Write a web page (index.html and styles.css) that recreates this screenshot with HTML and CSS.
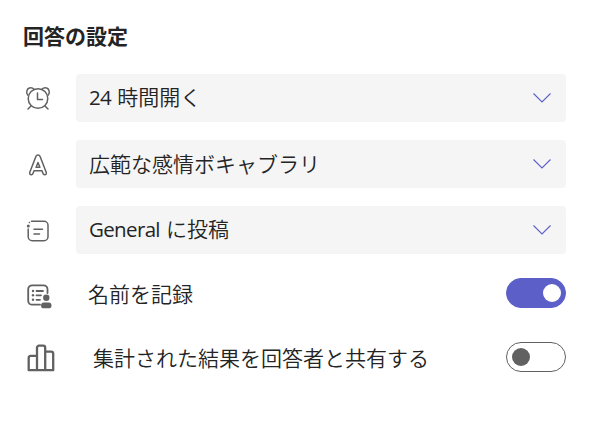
FILE: index.html
```html
<!DOCTYPE html>
<html lang="ja">
<head>
<meta charset="utf-8" />
<title>回答の設定</title>
<link rel="stylesheet" href="styles.css">
</head>
<body>
	<section class="settings">
		<h2>回答の設定</h2>

		<div class="row">
			<svg class="icon" viewBox="0 0 30 30" aria-hidden="true">
				<circle cx="15" cy="15.5" r="9.8" />
				<path d="M14.5 10v6.5h5M8 23l-3 3M22 23l3 3" />
				<path d="M4.8 12.1C2.4 8.8 4.3 4.8 7.8 4.8c1.4 0 2.4.5 3.2 1.4M25.2 12.1c2.4-3.3.5-7.3-3-7.3-1.4 0-2.4.5-3.2 1.4" />
			</svg>
			<div class="select">
				<span><span class="latin">24 </span>時間開く</span>
				<svg class="chevron" viewBox="0 0 20 12"><path d="M1.5 1.5L10 10l8.500-8.500" /></svg>
			</div>
		</div>

		<div class="row">
			<svg class="icon" viewBox="0 -1 30 30" aria-hidden="true">
				<path d="M12.900 6.500L6.800 22.300c-.5 1.400.3 2.500 1.500 2.500.8 0 1.400-.5 1.700-1.300l1-2.700h8l1 2.700c.3.8.9 1.300 1.700 1.300 1.200 0 2-1.100 1.500-2.500L17.100 6.500c-.7-1.900-3.500-1.900-4.200 0z" />
				<path d="M15 12.500l-1.900 4.700h3.800z" />
			</svg>
			<div class="select">
				<span>広範な感情ボキャブラリ</span>
				<svg class="chevron" viewBox="0 0 20 12"><path d="M1.5 1.5L10 10l8.500-8.500" /></svg>
			</div>
		</div>

		<div class="row">
			<svg class="icon" viewBox="0 -.5 30 30" aria-hidden="true">
				<path d="M8.500 5.800h12.500a4 4 0 0 1 4 4v11.400a4 4 0 0 1-4 4H9.200a4 4 0 0 1-4-4V13.500M11 13.800h8.500M11 18.400h5.500" />
				<circle class="solid" cx="5.300" cy="10.500" r="1.500" />
				<circle class="solid" cx="6.400" cy="7" r=".8" />
			</svg>
			<div class="select">
				<span><span class="latin">General </span>に投稿</span>
				<svg class="chevron" viewBox="0 0 20 12"><path d="M1.5 1.5L10 10l8.500-8.500" /></svg>
			</div>
		</div>

		<div class="row row-toggle">
			<svg class="icon icon-names" viewBox="0 -2 30 30" aria-hidden="true">
				<path d="M17 24.700H9.200a4 4 0 0 1-4-4V9.300a4 4 0 0 1 4-4H20.500a4 4 0 0 1 4 4v3.700" />
				<path d="M13.500 11h6.500M13.500 15.300h4.500M13.500 19.800h3.500" />
				<g class="solid">
					<circle cx="10" cy="11" r="1.200" />
					<circle cx="10" cy="15.300" r="1.200" />
					<circle cx="10" cy="19.800" r="1.200" />
					<circle cx="23.300" cy="17.800" r="3.200" />
					<rect x="18" y="22.500" width="10.500" height="5.800" rx="2.900" />
				</g>
			</svg>
			<span class="label">名前を記録</span>
			<span class="toggle toggle-on" role="switch" aria-checked="true"></span>
		</div>

		<div class="row row-toggle row-share">
			<svg class="icon icon-chart" viewBox="0 -1 30 30" aria-hidden="true">
				<path d="M2.700 27.200V14.800a2 2 0 0 1 2-2H11M11 27.200V4.700a2 2 0 0 1 2-2h4.200a2 2 0 0 1 2 2v22.500M19.200 8.700h6a2 2 0 0 1 2 2v16.500H2.700" />
			</svg>
			<span class="label">集計された結果を回答者と共有する</span>
			<span class="toggle" role="switch" aria-checked="false"></span>
		</div>
	</section>
</body>
</html>
```

FILE: styles.css
```css
body {
	margin: 0;
	background: #fff;
	color: #242424;
	font-family: "Noto Sans CJK JP", sans-serif;
	font-size: 21px;
	font-weight: 350;
	line-height: 30px;
}

.settings {
	padding: 20px 27px 0 23px;
}

h2 {
	margin: 0 0 24px;
	font-size: 21px;
	font-weight: bold;
}

.row {
	display: flex;
	align-items: center;
	margin-bottom: 18px;
}

.icon {
	flex: none;
	width: 30px;
	height: 30px;
	margin-right: 23px;
	fill: none;
	stroke: #616161;
	stroke-width: 1.5;
	stroke-linecap: round;
	stroke-linejoin: round;
	overflow: visible;
}
.icon .solid {
	fill: #616161;
	stroke: none;
}
.icon-names {
	stroke-width: 1.8;
}
.icon-chart {
	margin-left: 3px;
	margin-right: 20px;
	stroke-width: 2.3;
}

.select {
	display: flex;
	flex: 1;
	align-items: center;
	justify-content: space-between;
	box-sizing: border-box;
	height: 48px;
	padding: 0 14px 0 13px;
	border-radius: 4px;
	background: #f5f5f5;
}
.select > span {
	padding-bottom: 3px;
}

.latin {
	font-family: "Open Sans", sans-serif;
	font-size: 20.5px;
	font-weight: 400;
	letter-spacing: -.65px;
	word-spacing: 1.5px;
}

.chevron {
	width: 20px;
	height: 12px;
	fill: none;
	stroke: #5b5fc7;
	stroke-width: 1.1;
}

/* Switch rows */
.row-toggle {
	height: 30px;
	margin: 24px 0 34px;
}
.label {
	flex: 1;
	margin-left: 12px;
}
.row-share .label {
	margin-left: 17px;
}
.toggle {
	display: flex;
	align-items: center;
	box-sizing: border-box;
	width: 60px;
	height: 30px;
	padding: 0 5px;
	border: 1px solid #616161;
	border-radius: 15px;
}
.toggle:before {
	content: "";
	width: 18px;
	height: 18px;
	border-radius: 50%;
	background: #616161;
}
.toggle-on {
	justify-content: flex-end;
	padding: 0 4px;
	border-color: #5b5fc7;
	background: #5b5fc7;
}
.toggle-on:before {
	background: #fff;
}
```
